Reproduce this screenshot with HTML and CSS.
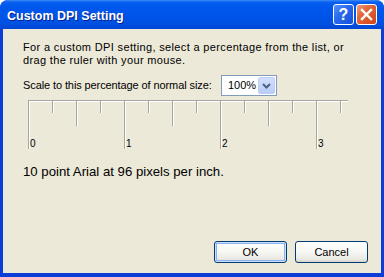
FILE: index.html
```html
<!DOCTYPE html>
<html lang="en">

<head>
    <meta charset="UTF-8">
    <meta name="viewport" content="width=device-width, initial-scale=1.0">
    <title>Custom DPI Setting</title>
    <link rel="stylesheet" href="styles.css">
</head>

<body>
    <div id="window">
        <div id="titlebar">
            <span class="title">Custom DPI Setting</span>
            <div class="caption-btns">
                <div class="cap-btn help">?</div>
                <div class="cap-btn close">
                    <svg width="21" height="21" viewBox="0 0 21 21">
                        <path d="M6 6 L15 15 M15 6 L6 15" stroke="#fff" stroke-width="2.4" stroke-linecap="square" />
                    </svg>
                </div>
            </div>
        </div>

        <div id="client">
            <p class="intro">For a custom DPI setting, select a percentage from the list, or<br>drag the ruler with your mouse.</p>

            <div class="scale-row">
                <label>Scale to this percentage of normal size:</label>
                <div class="combo">
                    <span class="combo-text">100%</span>
                    <span class="combo-arrow">
                        <svg width="15" height="17" viewBox="0 0 15 17">
                            <path d="M4 7 L7.5 10.5 L11 7" fill="none" stroke="#4D6185" stroke-width="2" />
                        </svg>
                    </span>
                </div>
            </div>

            <!-- ruler: 96px per inch, tick every quarter -->
            <svg class="ruler" width="322" height="52" viewBox="0 0 322 52" shape-rendering="crispEdges">
                <rect x="1" y="1" width="320" height="1" fill="#A7A6A0" />
                <rect x="2" y="2" width="319" height="1" fill="#fff" />
                <g id="ticks"></g>
                <g class="labels">
                    <text x="3" y="48">0</text>
                    <text x="99" y="48">1</text>
                    <text x="195" y="48">2</text>
                    <text x="291" y="48">3</text>
                </g>
            </svg>

            <p class="sample">10 point Arial at 96 pixels per inch.</p>

            <div class="btn-row">
                <button class="btn default">OK</button>
                <button class="btn">Cancel</button>
            </div>
        </div>
    </div>

    <script>
        // 画刻度
        var oTicks = document.getElementById('ticks');
        var html = '';
        for (var i = 0; i < 14; i++) {
            var x = 1 + i * 24;
            var h = i % 4 == 0 ? 49 : (i % 2 == 0 ? 26 : 13);
            html += '<rect x="' + x + '" y="1" width="1" height="' + h + '" fill="#A7A6A0"/>';
            html += '<rect x="' + (x + 1) + '" y="2" width="1" height="' + (h - 1) + '" fill="#fff"/>';
        }
        oTicks.innerHTML = html;
    </script>
</body>

</html>
```

FILE: styles.css
```css
* {
    margin: 0;
    padding: 0;
    box-sizing: border-box;
}

body {
    background: #fff;
    width: 384px;
    height: 277px;
    overflow: hidden;
    font-family: "Liberation Sans", Arial, sans-serif;
    font-size: 11px;
    color: #000;
}

#window {
    height: 277px;
    display: flex;
    flex-direction: column;
    border-radius: 8px 8px 0 0;
    overflow: hidden;
    background: #0A3ED6;
}

#titlebar {
    flex: none;
    height: 29px;
    padding: 2px 7px 0 7px;
    display: flex;
    align-items: center;
    background: linear-gradient(#3D8DF9 0, #0A61EE 2px, #0058EE 6px, #0055EA 50%, #0050E2 80%, #0346D3 100%);
}

#titlebar .title {
    flex: 1;
    color: #fff;
    font-weight: bold;
    font-size: 12.5px;
    text-shadow: 1px 1px #0A1F8F;
}

.caption-btns {
    display: flex;
    gap: 2px;
    margin-top: -2px;
}

.cap-btn {
    width: 21px;
    height: 21px;
    border: 1px solid #fff;
    border-radius: 3px;
    color: #fff;
    text-align: center;
}

.cap-btn.help {
    background: linear-gradient(135deg, #5A93F8 0, #2A6BEE 40%, #1450DC 100%);
    font-weight: bold;
    font-size: 16px;
    line-height: 19px;
}

.cap-btn.close {
    background: linear-gradient(135deg, #F0A080 0, #E3693C 35%, #CF4416 100%);
}

.cap-btn.close svg {
    display: block;
    margin: -1px;
}

#client {
    flex: 1;
    margin: 0 3px 4px;
    background: #ECE9D8;
    padding: 12px 13px 10px 20px;
    display: flex;
    flex-direction: column;
}

.intro {
    line-height: 13px;
    letter-spacing: 0.35px;
}

.scale-row {
    display: flex;
    align-items: center;
    margin-top: 8px;
    height: 21px;
}

.scale-row label {
    width: 198px;
    line-height: 13px;
    letter-spacing: -0.1px;
}

.combo {
    width: 56px;
    height: 21px;
    border: 1px solid #7F9DB9;
    background: #fff;
    display: flex;
    align-items: center;
    padding: 1px;
}

.combo-text {
    flex: 1;
    padding-left: 5px;
    line-height: 13px;
}

.combo-arrow {
    width: 17px;
    height: 17px;
    border-radius: 2px;
    background: linear-gradient(#D2DFFD, #B9CDF9);
    border: 1px solid #BBCCF5;
}

.combo-arrow svg {
    display: block;
    margin: -1px 0 0 0;
}

.ruler {
    display: block;
    margin: 3px 0 0 4px;
}

.ruler text {
    font-family: "Liberation Sans", Arial, sans-serif;
    font-size: 10px;
    fill: #000;
}

.sample {
    margin-top: 13px;
    font-size: 13.2px;
    line-height: 16px;
}

.btn-row {
    margin-top: auto;
    display: flex;
    justify-content: flex-end;
    gap: 8px;
}

.btn {
    width: 73px;
    height: 22px;
    border: 1px solid #003C74;
    border-radius: 3px;
    background: linear-gradient(#FFFFFF 0, #F6F6F3 50%, #EAE9E3 85%, #D8D5CB 100%);
    font-family: "Liberation Sans", Arial, sans-serif;
    font-size: 11px;
    color: #000;
}

.btn.default {
    box-shadow: inset 0 0 0 1px #CDE0FC, inset 0 0 0 2px #8AB2EE;
}
```
